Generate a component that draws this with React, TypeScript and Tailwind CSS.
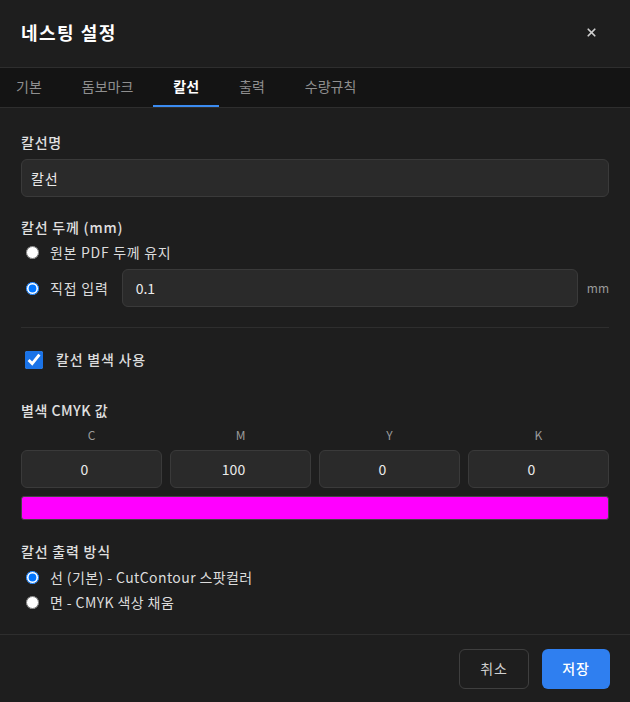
import { X } from "lucide-react";

const font = { fontFamily: '"Noto Sans CJK KR", "Noto Sans", sans-serif' };

const tabs = ["기본", "돔보마크", "칼선", "출력", "수량규칙"];
const cmyk = [
  { k: "C", v: "0" },
  { k: "M", v: "100" },
  { k: "Y", v: "0" },
  { k: "K", v: "0" },
];

export default function App() {
  return (
    <div className="w-[630px] h-[702px] bg-[#1e1e1e] text-[#e5e5e5] flex flex-col overflow-hidden" style={font}>
      {/* header */}
      <div className="h-[68px] flex items-center justify-between px-[21px] pb-[3px] border-b border-[#2e2e2e]">
        <h1 className="text-[18px] font-bold text-white tracking-[1.5px]">네스팅 설정</h1>
        <button className="text-[#cfcfcf] pr-[11px]">
          <X size={13} strokeWidth={3.2} />
        </button>
      </div>

      {/* tabs */}
      <div className="h-[40px] bg-[#141414] border-b border-[#2e2e2e] flex">
        <div className="flex -ml-1">
          {tabs.map((t) => (
            <div
              key={t}
              className={`px-5 h-[39px] flex items-center text-[14px] border-b-2 ${
                t === "칼선" ? "text-white font-bold border-[#3b8bf0]" : "text-[#8f8f8f] border-transparent"
              }`}
            >
              {t}
            </div>
          ))}
        </div>
      </div>

      {/* body */}
      <div className="flex-1 px-[21px] pt-[24px]">
        <div className="text-[14px] leading-[20px] font-medium text-[#e0e0e0] tracking-[0.8px]">칼선명</div>
        <div className="mt-[7px] h-[38px] rounded-md bg-[#2a2a2a] border border-[#3a3a3a] flex items-center px-[9px] text-[14px] tracking-[0.8px] text-[#eaeaea]">
          칼선
        </div>

        <div className="mt-[20px] text-[14px] leading-[20px] font-medium text-[#e0e0e0] tracking-[0.8px]">칼선 두께 (mm)</div>
        <label className="mt-[4px] flex items-center gap-[11px] pl-[5px] h-[22px] text-[14px] tracking-[0.7px] text-[#dcdcdc]">
          <input type="radio" name="w" className="m-0 w-[13px] h-[13px]" />
          원본 PDF 두께 유지
        </label>
        <div className="mt-[6px] flex items-center pl-[5px] text-[14px] tracking-[0.8px] text-[#dcdcdc]">
          <label className="flex items-center gap-[11px]">
            <input type="radio" name="w" defaultChecked className="m-0 w-[13px] h-[13px]" />
            직접 입력
          </label>
          <div className="ml-[13px] flex-1 h-[38px] rounded-md bg-[#2a2a2a] border border-[#3a3a3a] flex items-center px-[13px] text-[14px] tracking-normal text-[#eaeaea]">
            0.1
          </div>
          <span className="ml-[9px] text-[12px] tracking-normal text-[#9a9a9a]">mm</span>
        </div>

        <div className="mt-[20px] border-t border-[#2e2e2e]" />

        <label className="mt-[21px] flex items-center gap-[13px] pl-[4px] text-[14px] font-medium tracking-[0.8px] text-[#dcdcdc]">
          <input type="checkbox" defaultChecked className="m-0 w-[18px] h-[18px] accent-[#1a73e8]" />
          칼선 별색 사용
        </label>

        <div className="mt-[30px] text-[14px] leading-[20px] font-medium text-[#e0e0e0] tracking-[0.5px]">별색 CMYK 값</div>
        <div className="mt-[6px] grid grid-cols-4 gap-2">
          {cmyk.map((c) => (
            <div key={c.k} className="flex flex-col">
              <div className="text-center text-[12px] leading-[18px] text-[#9a9a9a]">{c.k}</div>
              <div className="mt-[6px] h-[38px] rounded-md bg-[#2a2a2a] border border-[#3a3a3a] flex items-center justify-center pr-[14px] text-[14px] text-[#eaeaea]">
                {c.v}
              </div>
            </div>
          ))}
        </div>
        <div className="mt-[8px] h-[24px] rounded-[3px] bg-[#ff00ff] border border-[#444]" />

        <div className="mt-[21px] text-[14px] leading-[20px] font-medium text-[#e0e0e0] tracking-[0.8px]">칼선 출력 방식</div>
        <label className="mt-[5px] flex items-center gap-[11px] pl-[5px] h-[22px] text-[14px] tracking-[0.4px] text-[#dcdcdc]">
          <input type="radio" name="o" defaultChecked className="m-0 w-[13px] h-[13px]" />
          선 (기본) - CutContour 스팟컬러
        </label>
        <label className="mt-[3px] flex items-center gap-[11px] pl-[5px] h-[22px] text-[14px] tracking-[0.4px] text-[#dcdcdc]">
          <input type="radio" name="o" className="m-0 w-[13px] h-[13px]" />
          면 - CMYK 색상 채움
        </label>
      </div>

      {/* footer */}
      <div className="h-[68px] border-t border-[#2e2e2e] flex items-center justify-end gap-[13px] px-[20px]">
        <button className="w-[70px] h-[40px] rounded-md border border-[#3f3f3f] text-[14px] tracking-[0.8px] text-[#cfcfcf]">취소</button>
        <button className="w-[68px] h-[40px] rounded-md bg-[#2f7ff0] text-[14px] tracking-[0.8px] font-medium text-white">저장</button>
      </div>
    </div>
  );
}
